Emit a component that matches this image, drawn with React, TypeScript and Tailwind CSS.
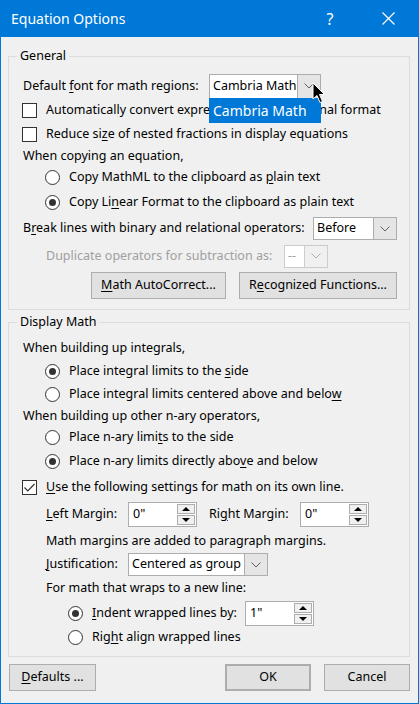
import React from "react"

const font = { fontFamily: '"Noto Sans", "Open Sans", sans-serif' }

function Chevron({ color = "#606060" }: { color?: string }) {
  return (
    <svg width="10" height="6" viewBox="0 0 10 6">
      <polyline points="0.5,0.5 5,5 9.5,0.5" fill="none" stroke={color} strokeWidth="1" />
    </svg>
  )
}

function Combo({ value, className, disabled }: { value: string; className: string; disabled?: boolean }) {
  return (
    <div className={`flex shrink-0 border ${disabled ? "border-[#cccccc] text-[#a0a0a0]" : "border-[#adadad] text-black"} ${className}`}>
      <div className="flex-1 bg-white flex items-center pl-[3px] whitespace-nowrap overflow-hidden">{value}</div>
      <div className={`w-[23px] border-l flex items-center justify-center ${disabled ? "border-[#cccccc] bg-[#f0f0f0]" : "border-[#adadad] bg-[#e5e5e5]"}`}>
        <Chevron color={disabled ? "#b0b0b0" : "#606060"} />
      </div>
    </div>
  )
}

function Spin({ value, className }: { value: string; className: string }) {
  return (
    <div className={`flex shrink-0 border border-[#adadad] bg-white h-[25px] ${className}`}>
      <div className="flex-1 flex items-center pl-[4px]">{value}</div>
      <div className="w-[19px] flex flex-col gap-px py-px pr-px">
        <div className="flex-1 border border-[#adadad] bg-[#f0f0f0] flex items-center justify-center">
          <svg width="8" height="4" viewBox="0 0 8 4"><polygon points="0,4 4,0 8,4" fill="#000" /></svg>
        </div>
        <div className="flex-1 border border-[#adadad] bg-[#f0f0f0] flex items-center justify-center">
          <svg width="8" height="4" viewBox="0 0 8 4"><polygon points="0,0 8,0 4,4" fill="#000" /></svg>
        </div>
      </div>
    </div>
  )
}

function Check({ checked }: { checked?: boolean }) {
  return (
    <span className="w-[15px] h-[15px] shrink-0 border border-[#333333] bg-white flex items-center justify-center">
      {checked && (
        <svg width="11" height="9" viewBox="0 0 11 9">
          <polyline points="0.5,4.5 3.8,7.8 10.5,1" fill="none" stroke="#333333" strokeWidth="1.2" />
        </svg>
      )}
    </span>
  )
}

function Radio({ checked }: { checked?: boolean }) {
  return (
    <span className="w-[15px] h-[15px] shrink-0 rounded-full border border-[#333333] bg-white flex items-center justify-center">
      {checked && <span className="w-[7px] h-[7px] rounded-full bg-[#333333]" />}
    </span>
  )
}

function Btn({ children, className }: { children: React.ReactNode; className: string }) {
  return (
    <div className={`h-[27px] flex items-center justify-center border border-[#adadad] bg-[#e1e1e1] whitespace-nowrap ${className}`}>
      {children}
    </div>
  )
}

const U = ({ children }: { children: React.ReactNode }) => <span className="underline underline-offset-2">{children}</span>

export default function App() {
  return (
    <div className="w-[419px] h-[704px] flex flex-col text-[12.5px] text-black relative whitespace-nowrap" style={font}>
      <div className="h-[37px] bg-[#0078d7] text-white flex items-center pl-[11px]">
        <span className="text-[14px] flex-1">Equation Options</span>
        <span className="text-[16px] w-[20px] text-center">?</span>
        <svg width="13" height="13" viewBox="0 0 13 13" className="ml-[42px] mr-[24px]">
          <path d="M0.5 0.5 L12.5 12.5 M12.5 0.5 L0.5 12.5" stroke="#fff" strokeWidth="1.2" />
        </svg>
      </div>

      <div className="flex-1 bg-[#f0f0f0] border-x border-b border-[#0078d7] pl-[7px] pr-[8px] pt-[19px] flex flex-col">
        {/* General */}
        <div className="relative border border-[#dcdcdc] pt-[17px] pb-[10px]">
          <span className="absolute left-[8px] top-[-11px] px-[3px] bg-[#f0f0f0] leading-[20px]">General</span>

          <div className="h-[24px] flex items-center pl-[14px]">
            <span className="w-[186px] shrink-0">Default <U>f</U>ont for math regions:</span>
            <div className="relative">
              <Combo value="Cambria Math" className="w-[112px] h-[25px]" />
              <div className="absolute left-0 top-[24px] w-[112px] h-[25px] bg-[#0078d7] text-white text-[14px] flex items-center pl-[4px]">
                Cambria Math
              </div>
              <svg width="14" height="22" viewBox="0 0 14 22" className="absolute left-[103px] top-[8px]">
                <path d="M1 1 L1 17 L5 13.5 L8 20.5 L10.5 19.5 L7.5 12.5 L12.5 12.5 Z" fill="#000" stroke="#fff" strokeWidth="1" />
              </svg>
            </div>
          </div>
          <div className="h-[24px] flex items-center pl-[13px] gap-[9px]">
            <Check />
            <span>Automatically convert expressions to professional format</span>
          </div>
          <div className="h-[25px] flex items-center pl-[13px] gap-[9px]">
            <Check />
            <span>Reduce si<U>z</U>e of nested fractions in display equations</span>
          </div>
          <div className="h-[19px] flex items-center pl-[14px]">When copying an equation,</div>
          <div className="h-[23px] flex items-center pl-[36px] gap-[9px]">
            <Radio />
            <span>Copy MathML to the clipboard as <U>p</U>lain text</span>
          </div>
          <div className="h-[26px] flex items-center pl-[36px] gap-[9px]">
            <Radio checked />
            <span>Copy Li<U>n</U>ear Format to the clipboard as plain text</span>
          </div>
          <div className="h-[27px] flex items-center pl-[14px]">
            <span className="w-[290px] shrink-0">B<U>r</U>eak lines with binary and relational operators:</span>
            <Combo value="Before" className="w-[84px] h-[23px]" />
          </div>
          <div className="h-[28px] flex items-center pl-[37px] text-[#a0a0a0]">
            <span className="w-[238px] shrink-0">Duplicate operators for subtraction as:</span>
            <Combo value="--" className="w-[44px] h-[23px]" disabled />
          </div>
          <div className="mt-[2px] flex pl-[82px] gap-[13px]">
            <Btn className="w-[135px]"><span><U>M</U>ath AutoCorrect...</span></Btn>
            <Btn className="w-[158px]"><span>R<U>e</U>cognized Functions...</span></Btn>
          </div>
        </div>

        {/* Display Math */}
        <div className="relative mt-[12px] border border-[#dcdcdc] pt-[14px] pb-[8px]">
          <span className="absolute left-[8px] top-[-11px] px-[3px] bg-[#f0f0f0] leading-[20px]">Display Math</span>

          <div className="h-[22px] flex items-center pl-[14px]">When building up integrals,</div>
          <div className="h-[24px] flex items-center pl-[36px] gap-[9px]">
            <Radio checked />
            <span>Place integral limits to the <U>s</U>ide</span>
          </div>
          <div className="h-[23px] flex items-center pl-[36px] gap-[9px]">
            <Radio />
            <span>Place integral limits centered above and belo<U>w</U></span>
          </div>
          <div className="h-[20px] flex items-center pl-[14px]">When building up other n-ary operators,</div>
          <div className="h-[23px] flex items-center pl-[36px] gap-[9px]">
            <Radio />
            <span>Place n-ary limi<U>t</U>s to the side</span>
          </div>
          <div className="h-[25px] flex items-center pl-[36px] gap-[9px]">
            <Radio checked />
            <span>Place n-ary limits directly abo<U>v</U>e and below</span>
          </div>
          <div className="h-[26px] flex items-center pl-[13px] gap-[9px]">
            <Check checked />
            <span><U>U</U>se the following settings for math on its own line.</span>
          </div>
          <div className="h-[29px] flex items-center pl-[37px]">
            <span className="w-[82px] shrink-0"><U>L</U>eft Margin:</span>
            <Spin value={'0"'} className="w-[69px]" />
            <span className="w-[103px] shrink-0 pl-[12px]">Ri<U>g</U>ht Margin:</span>
            <Spin value={'0"'} className="w-[69px]" />
          </div>
          <div className="h-[24px] flex items-center pl-[37px]">Math margins are added to paragraph margins.</div>
          <div className="h-[23px] flex items-center pl-[37px]">
            <span className="w-[82px] shrink-0"><U>J</U>ustification:</span>
            <Combo value="Centered as group" className="w-[140px] h-[23px]" />
          </div>
          <div className="h-[25px] flex items-center pl-[37px]">For math that wraps to a new line:</div>
          <div className="h-[25px] flex items-center pl-[59px]">
            <Radio checked />
            <span className="ml-[9px] w-[153px] shrink-0"><U>I</U>ndent wrapped lines by:</span>
            <Spin value={'1"'} className="w-[69px]" />
          </div>
          <div className="h-[22px] flex items-center pl-[59px] gap-[9px]">
            <Radio />
            <span>Rig<U>h</U>t align wrapped lines</span>
          </div>
        </div>

        {/* Footer */}
        <div className="mt-[7px] flex pl-[1px]">
          <Btn className="w-[87px]"><span><U>D</U>efaults ...</span></Btn>
          <div className="flex-1" />
          <Btn className="w-[86px] border-2 border-[#0078d7]"><span>OK</span></Btn>
          <Btn className="w-[86px] ml-[13px]"><span>Cancel</span></Btn>
        </div>
      </div>
    </div>
  )
}
